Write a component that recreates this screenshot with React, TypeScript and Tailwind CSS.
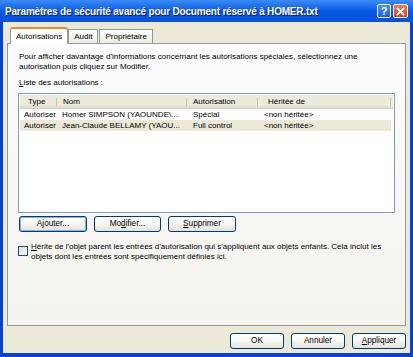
import type { JSX } from 'react';

const font = { fontFamily: '"Liberation Sans", Arial, sans-serif' };

function XpButton({ children, focused = false, w }: { children: React.ReactNode; focused?: boolean; w: string }): JSX.Element {
  return (
    <div
      className={`${w} flex h-[16px] items-center justify-center whitespace-nowrap rounded-[3px] border border-[#003c74] bg-gradient-to-b from-white via-[#f6f6f2] to-[#e3e2da] text-[8.2px] text-black ${
        focused ? 'shadow-[inset_0_0_0_1px_#8eaee8]' : ''
      }`}
    >
      {children}
    </div>
  );
}

const rows = [
  { type: 'Autoriser', name: 'Homer SIMPSON (YAOUNDE\\...', perm: 'Spécial', from: '<non héritée>', sel: false },
  { type: 'Autoriser', name: 'Jean-Claude BELLAMY (YAOU...', perm: 'Full control', from: '<non héritée>', sel: true },
];

export default function App(): JSX.Element {
  return (
    <div className="flex h-[357px] w-[413px] flex-col bg-[#0841d0]" style={font}>
      {/* title bar */}
      <div className="flex h-[22px] items-center bg-gradient-to-b from-[#3c8cf7] via-[#0658e6] to-[#0552dc] pl-[5px] pr-[5px]">
        <span className="flex-1 truncate text-[10px] font-bold tracking-[-0.2px] text-white [text-shadow:1px_1px_0_#0a1e6e]">
          Paramètres de sécurité avancé pour Document réservé à HOMER.txt
        </span>
        <div className="flex gap-[2px]">
          <div className="flex h-[14px] w-[14px] items-center justify-center rounded-[2px] border border-white bg-gradient-to-b from-[#4d8ff7] to-[#1f5fe0] text-[11px] font-bold leading-none text-white">
            ?
          </div>
          <div className="flex h-[14px] w-[15px] items-center justify-center rounded-[2px] border border-white bg-gradient-to-b from-[#ea7a57] to-[#d3421b]">
            <svg width="9" height="9" viewBox="0 0 9 9">
              <path d="M1.5 1.5 L7.5 7.5 M7.5 1.5 L1.5 7.5" stroke="white" strokeWidth="1.8" strokeLinecap="square" />
            </svg>
          </div>
        </div>
      </div>

      {/* body */}
      <div className="mx-[3px] mb-[4px] flex flex-1 flex-col bg-[#ece9d8] px-[4px] pt-[5px] text-black">
        {/* tabs */}
        <div className="flex items-end whitespace-nowrap pl-[3px] text-[8px]">
          <div className="relative z-10 -mb-px flex h-[17px] items-center rounded-t-[3px] border-x border-t-2 border-x-[#919b9c] border-t-[#e68b2c] bg-white px-[5px]">
            Autorisations
          </div>
          <div className="flex h-[14px] items-center border border-b-0 border-[#919b9c] bg-gradient-to-b from-white to-[#ecebe5] px-[5px]">
            Audit
          </div>
          <div className="ml-[1px] flex h-[14px] items-center border border-b-0 border-[#919b9c] bg-gradient-to-b from-white to-[#ecebe5] px-[5px]">
            Propriétaire
          </div>
        </div>

        {/* panel */}
        <div className="flex h-[283px] flex-col whitespace-nowrap border border-[#919b9c] bg-gradient-to-b from-[#fcfcfe] to-[#f4f3ee] px-[10px] pt-[8px] text-[8px]">
          <p className="ml-[1px] leading-[10px]">
            Pour afficher davantage d'informations concernant les autorisations spéciales, sélectionnez une
            <br />
            autorisation puis cliquez sur Modifier.
          </p>
          <div className="ml-[1px] mt-[6px] leading-[10px]">
            <span className="underline">L</span>iste des autorisations :
          </div>

          <div className="mt-[5px] h-[120px] border border-[#7f9db9] bg-white p-px">
            <div className="flex h-[14px] items-center border-b border-[#d6d2c2] bg-[#ebeadb] shadow-[inset_0_-2px_0_#e2decd]">
              <div className="relative h-full w-[37px] pl-[8px] leading-[13px]">Type<span className="absolute right-0 top-[3px] h-[8px] w-px bg-[#c7c5b2]" /></div>
              <div className="relative h-full w-[130px] pl-[6px] leading-[13px]">Nom<span className="absolute right-0 top-[3px] h-[8px] w-px bg-[#c7c5b2]" /></div>
              <div className="relative h-full w-[71px] pl-[6px] leading-[13px]">Autorisation<span className="absolute right-0 top-[3px] h-[8px] w-px bg-[#c7c5b2]" /></div>
              <div className="relative h-full w-[133px] pl-[10px] leading-[13px]">Héritée de<span className="absolute right-0 top-[3px] h-[8px] w-px bg-[#c7c5b2]" /></div>
            </div>
            {rows.map((r) => (
              <div key={r.name} className={`flex h-[11px] w-[371px] items-center leading-[11px] ${r.sel ? 'bg-[#ece9d8]' : ''}`}>
                <div className="w-[37px] pl-[4px]">{r.type}</div>
                <div className="w-[130px] pl-[5px]">{r.name}</div>
                <div className="w-[71px] pl-[6px]">{r.perm}</div>
                <div className="w-[133px] pl-[6px]">{r.from}</div>
              </div>
            ))}
          </div>

          <div className="ml-[1px] mt-[3px] flex gap-[7px]">
            <XpButton w="w-[68px]" focused>
              A<span className="underline">j</span>outer...
            </XpButton>
            <XpButton w="w-[67px]">
              Mo<span className="underline">d</span>ifier...
            </XpButton>
            <XpButton w="w-[68px]">
              <span className="underline">S</span>upprimer
            </XpButton>
          </div>

          <div className="mt-[10px] flex gap-[3px]">
            <div className="mt-[4px] h-[10px] w-[10px] shrink-0 border border-[#1c5180] bg-gradient-to-br from-[#dcdcd7] to-white" />
            <p className="leading-[10px]">
              <span className="underline">H</span>érite de l'objet parent les entrées d'autorisation qui s'appliquent aux objets enfants. Cela inclut les
              <br />
              objets dont les entrées sont spécifiquement définies ici.
            </p>
          </div>
        </div>

        {/* dialog buttons */}
        <div className="mt-[7px] flex justify-end gap-[7px]">
          <XpButton w="w-[54px]">OK</XpButton>
          <XpButton w="w-[54px]">Annuler</XpButton>
          <XpButton w="w-[54px]">
            <span className="underline">A</span>ppliquer
          </XpButton>
        </div>
      </div>
    </div>
  );
}
